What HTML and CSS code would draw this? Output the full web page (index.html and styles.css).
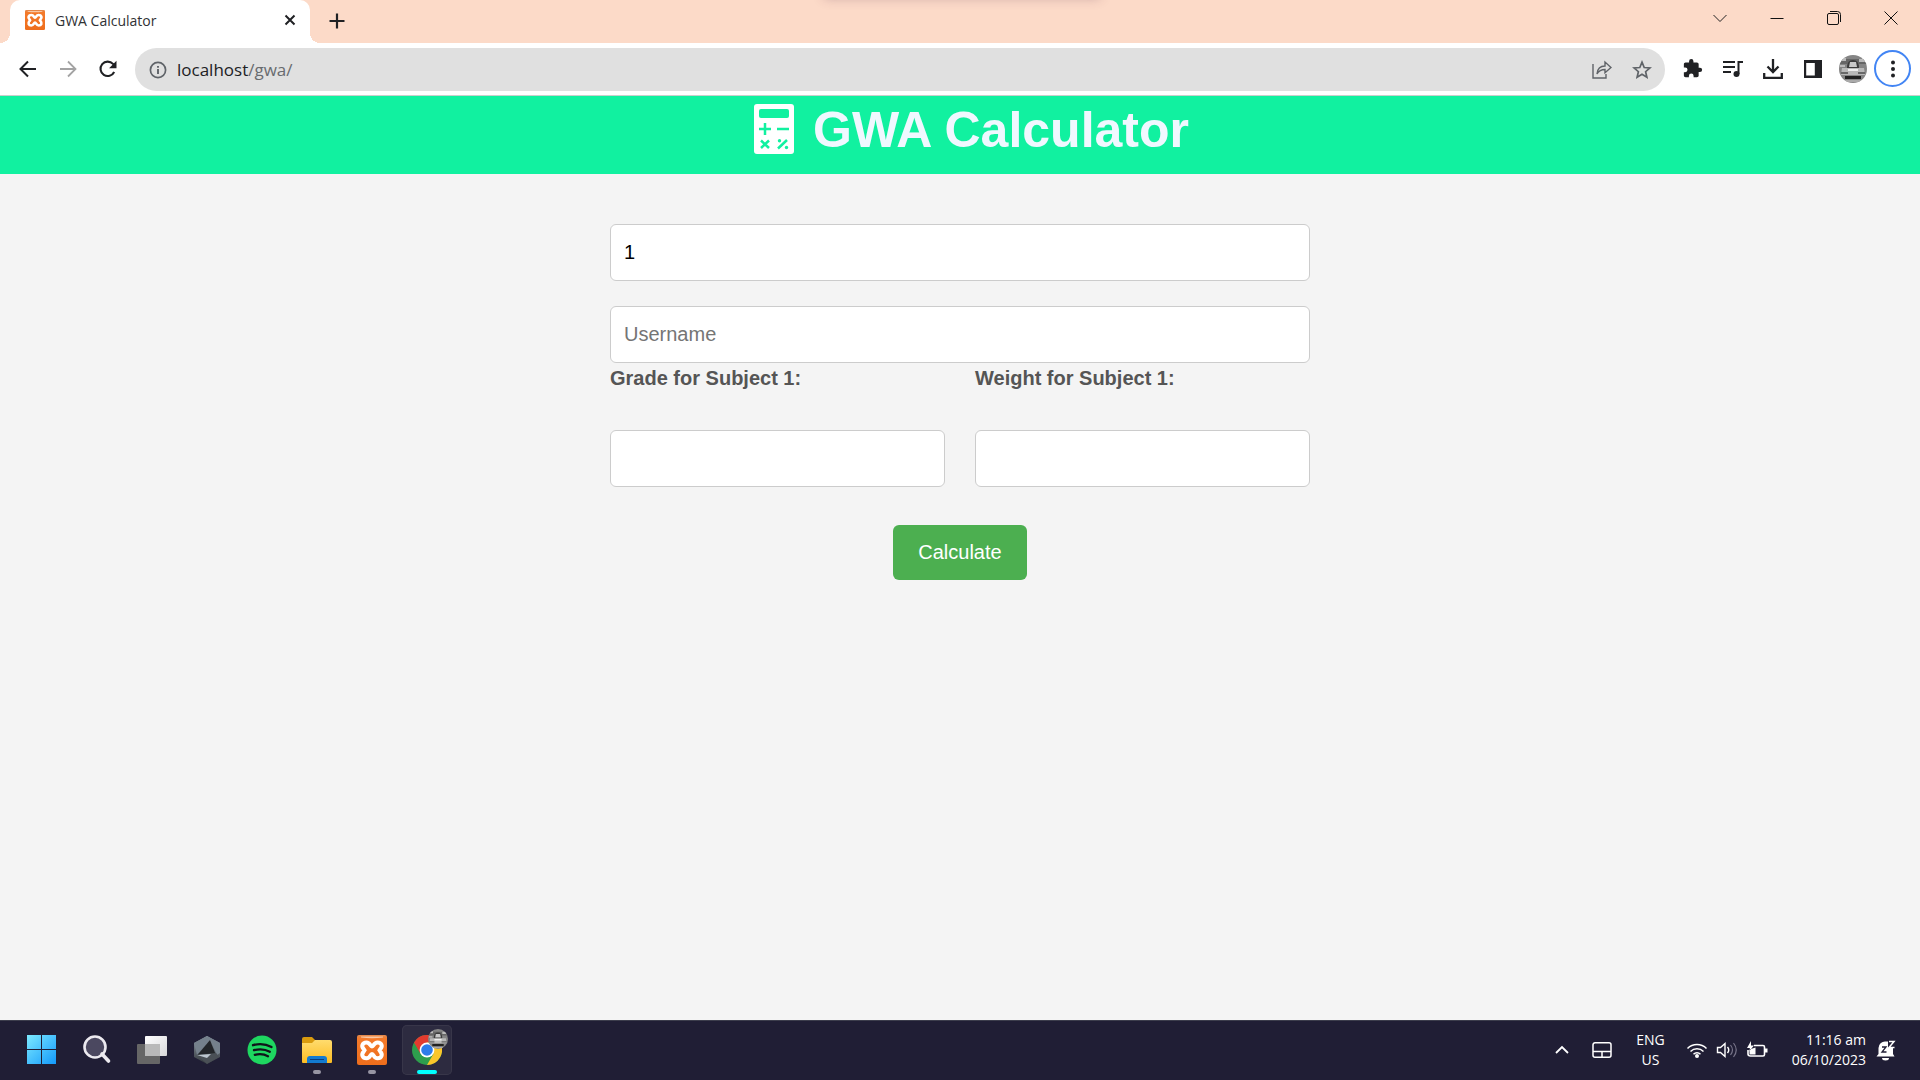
FILE: index.html
```html
<!DOCTYPE html>
<html lang="en">
<head>
<meta charset="utf-8">
<meta name="viewport" content="width=device-width, initial-scale=1">
<title>GWA Calculator</title>
<link rel="stylesheet" href="styles.css">
</head>
<body>
<svg class="defs" aria-hidden="true">
  <defs>
    <linearGradient id="orange" x1="0" y1="0" x2="0" y2="1"><stop offset="0" stop-color="#e08a50"/><stop offset=".12" stop-color="#f47a2a"/><stop offset="1" stop-color="#ee6d1c"/></linearGradient>
    <linearGradient id="win" x1="0" y1="0" x2="1" y2="1" ><stop offset="0" stop-color="#7deaff"/><stop offset="1" stop-color="#1399fb"/></linearGradient>
    <linearGradient id="folder" x1="0" y1="0" x2="0" y2="1"><stop offset="0" stop-color="#ffdc6e"/><stop offset="1" stop-color="#fcbc22"/></linearGradient>
    <linearGradient id="pane" x1="0" y1="0" x2="1" y2="1"><stop offset="0" stop-color="#fff"/><stop offset="1" stop-color="#d8d8da"/></linearGradient>
    <linearGradient id="steel" x1="0" y1="0" x2="0" y2="1"><stop offset="0" stop-color="#8f9aa5"/><stop offset="1" stop-color="#33383d"/></linearGradient>
    <clipPath id="round"><circle cx="14" cy="14" r="14"/></clipPath>
  </defs>
  <symbol id="xampp" viewBox="0 0 30 30">
    <rect width="30" height="30" rx="2" fill="url(#orange)"/>
    <path d="M4 1.500h22v1q-11 1.500-22 0z" fill="#f9c8a4"/>
    <path d="M15 11.500C17 11.500 16.500 7.500 20.500 7.500C24.700 7.500 26 11.500 23.300 14L22.500 15.300L23.300 16.600C26 19.500 24.700 23.300 20.500 23.300C16.500 23.300 17 19 15 19C13 19 13.500 23.300 9.500 23.300C5.300 23.300 4 19.500 6.700 16.600L7.500 15.300L6.700 14C4 11.500 5.300 7.500 9.500 7.500C13.500 7.500 13 11.500 15 11.500Z" fill="none" stroke="#fff" stroke-width="4"/>
  </symbol>
  <symbol id="avatar" viewBox="0 0 28 28">
    <g clip-path="url(#round)">
      <rect width="28" height="28" fill="#858585"/>
      <path d="M0 4h28v5H0z" fill="#666"/><path d="M2 3h5v3H2zM20 4h6v3h-6zM1 10h5v2H1z" fill="#bbb"/>
      <path d="M8 13q0-8 6-8t6 8z" fill="#3c3c3c"/><path d="M11 7h6l1 5h-8z" fill="#c8c8c8"/>
      <path d="M3 13h22l1 7H2z" fill="#b9b9b9"/><path d="M9 14h10v2H9z" fill="#eee"/>
      <path d="M2 17h7v2H2zM19 17h7v2h-7z" fill="#686868"/><path d="M6 21h16v3H6z" fill="#222"/><path d="M6 25h16v2H6z" fill="#aaa"/>
    </g>
  </symbol>
</svg>

<header class="browser">
  <div class="tabstrip">
    <div class="tab">
      <svg class="favicon" aria-hidden="true"><use href="#xampp"/></svg>
      <span class="tab-title">GWA Calculator</span>
      <button class="bare tab-close" aria-label="Close tab"><svg width="12" height="12" viewBox="0 0 12 12"><path d="M1.500 1.500l9 9m0-9l-9 9" stroke="#202124" stroke-width="2"/></svg></button>
    </div>
    <button class="bare new-tab" aria-label="New tab"><svg width="16" height="16" viewBox="0 0 16 16"><path d="M8 .5v15M.5 8h15" stroke="#202124" stroke-width="2.200"/></svg></button>
    <div class="window-controls">
      <button class="bare" aria-label="Search tabs"><svg width="14" height="14" viewBox="0 0 14 14"><path d="M.5 4L7 10.500L13.500 4" fill="none" stroke="#222"/></svg></button>
      <button class="bare" aria-label="Minimize"><svg width="14" height="14" viewBox="0 0 14 14"><path d="M.5 7.500h13" stroke="#111"/></svg></button>
      <button class="bare" aria-label="Restore"><svg width="14" height="14" viewBox="0 0 14 14"><rect x=".5" y="2.500" width="11" height="11" rx="1.500" fill="none" stroke="#111"/><path d="M3 .5h7.500a3 3 0 0 1 3 3V11" fill="none" stroke="#111"/></svg></button>
      <button class="bare" aria-label="Close"><svg width="14" height="14" viewBox="0 0 14 14"><path d="M.5 .5l13 13m0-13l-13 13" stroke="#111"/></svg></button>
    </div>
  </div>

  <div class="toolbar">
    <nav class="history">
      <button class="bare" aria-label="Back"><svg width="18" height="18" viewBox="0 0 18 18"><path d="M17 9H2M9 1.500L1.500 9L9 16.500" fill="none" stroke="#202124" stroke-width="2"/></svg></button>
      <button class="bare" aria-label="Forward"><svg width="18" height="18" viewBox="0 0 18 18"><path d="M1 9h15M9 1.500L16.500 9L9 16.500" fill="none" stroke="#a3a3a3" stroke-width="1.800"/></svg></button>
      <button class="bare" aria-label="Reload"><svg width="18" height="18" viewBox="0 0 18 18"><path d="M15.200 12A7.200 7.200 0 1 1 14 3.900L15.500 5.500" fill="none" stroke="#202124" stroke-width="2.100"/><path d="M17.500 .8v7.400h-7.400z" fill="#202124"/></svg></button>
    </nav>
    <div class="omnibox">
      <svg width="18" height="18" viewBox="0 0 18 18" aria-hidden="true"><circle cx="9" cy="9" r="7.600" fill="none" stroke="#5f6368" stroke-width="1.700"/><path d="M9 8v5M9 5v1.800" stroke="#5f6368" stroke-width="1.900"/></svg>
      <span class="url">localhost<span class="url-path">/gwa/</span></span>
      <button class="bare" aria-label="Share"><svg width="20" height="20" viewBox="0 0 20 20"><path d="M1 4v14h13v-4M5 14c.5-6 3.500-8 8-8V2l6 5.500l-6 5.300V9.500c-3.500 0-6 1-8 4.500z" fill="none" stroke="#5f6368" stroke-width="1.400"/></svg></button>
      <button class="bare" aria-label="Bookmark"><svg width="20" height="20" viewBox="0 0 20 20"><path d="M10 2.200l2.200 5.300 5.700.5-4.300 3.700 1.300 5.600-4.900-3-4.900 3 1.300-5.600L2.100 8l5.700-.5z" fill="none" stroke="#5f6368" stroke-width="1.700"/></svg></button>
    </div>
    <div class="actions">
      <button class="bare" aria-label="Extensions"><svg width="20" height="20" viewBox="1 1 23 23"><path d="M20.500 11H19V7c0-1.100-.9-2-2-2h-4V3.500a2.500 2.500 0 0 0-5 0V5H4c-1.100 0-2 .9-2 2v3.800h1.500a2.700 2.700 0 0 1 0 5.400H2V20c0 1.100.9 2 2 2h3.800v-1.500a2.700 2.700 0 0 1 5.400 0V22H17c1.100 0 2-.9 2-2v-4h1.500a2.500 2.500 0 0 0 0-5z" fill="#202124"/></svg></button>
      <button class="bare" aria-label="Media control"><svg width="20" height="20" viewBox="0 0 20 20"><path d="M0 3h12M0 8h12M0 13h8M15.500 15V3H20" fill="none" stroke="#202124" stroke-width="2"/><circle cx="13.500" cy="15" r="3" fill="#202124"/></svg></button>
      <button class="bare" aria-label="Downloads"><svg width="20" height="20" viewBox="0 0 20 20"><path d="M10 0v13M4.500 7.500L10 13l5.500-5.500M1.200 14v4.800h17.600V14" fill="none" stroke="#202124" stroke-width="2.300"/></svg></button>
      <button class="bare" aria-label="Side panel"><svg width="20" height="20" viewBox="0 0 20 20"><path d="M1 1h18v18H1zM3.200 4v12.500h8.600V4z" fill="#202124" fill-rule="evenodd"/></svg></button>
      <button class="bare" aria-label="Profile"><svg width="28" height="28"><use href="#avatar"/></svg></button>
      <button class="bare menu" aria-label="Menu"><svg width="6" height="18" viewBox="0 0 6 18"><g fill="#202124"><circle cx="3" cy="2.500" r="2"/><circle cx="3" cy="9" r="2"/><circle cx="3" cy="15.500" r="2"/></g></svg></button>
    </div>
  </div>
</header>

<main class="page">
  <h1 class="banner">
    <svg class="banner-icon" viewBox="0 0 50 50" aria-hidden="true">
      <rect x="5" width="40" height="50" rx="3" fill="#fff"/>
      <rect x="10" y="5" width="30" height="9" rx="2" fill="#11f1a0"/>
      <path d="M10 25h12M16 19v12M28 25h12M12 36.500l8 7.500m0-7.500l-8 7.500M29 44.500l9-8.500" stroke="#11f1a0" stroke-width="2.500"/>
      <circle cx="30.500" cy="36.700" r="1.700" fill="#11f1a0"/><circle cx="37.500" cy="43.500" r="1.700" fill="#11f1a0"/>
    </svg>
    <span>GWA Calculator</span>
  </h1>
  <form class="form">
    <input class="field" type="text" inputmode="numeric" value="1" aria-label="Number of subjects">
    <input class="field" type="text" placeholder="Username" aria-label="Username">
    <div class="pair">
      <div class="column">
        <label for="grade1">Grade for Subject 1:</label>
        <input class="field" id="grade1" type="text">
      </div>
      <div class="column">
        <label for="weight1">Weight for Subject 1:</label>
        <input class="field" id="weight1" type="text">
      </div>
    </div>
    <button class="submit" type="button">Calculate</button>
  </form>
</main>

<footer class="taskbar">
  <div class="apps">
    <button class="bare app" aria-label="Start"><svg width="30" height="30" viewBox="0 0 30 30"><path d="M0 0h14v14H0zM15 0h14v14H15zM0 15h14v14H0zM15 15h14v14H15z" fill="url(#win)"/></svg></button>
    <button class="bare app" aria-label="Search"><svg width="30" height="30" viewBox="0 0 30 30"><circle cx="13" cy="12" r="10.500" fill="#4b4860" stroke="#eceaf0" stroke-width="2.600"/><path d="M20 19l6.500 7" stroke="#eceaf0" stroke-width="3.600" stroke-linecap="round"/></svg></button>
    <button class="bare app" aria-label="Task view"><svg width="30" height="30" viewBox="0 0 30 30"><rect x="0" y="9" width="23" height="20" rx="1" fill="#666"/><rect x="8" y="1" width="22" height="20" rx="1" fill="url(#pane)"/><path d="M8 9h15v12H8z" fill="#b9b9b9"/></svg></button>
    <button class="bare app" aria-label="Armoury"><svg width="30" height="30" viewBox="0 0 30 30"><path d="M15 1l13 7v14l-13 7l-13-7V8z" fill="url(#steel)"/><path d="M15 1l13 7v10l-3 2l-7-15L5 20L2 8z" fill="#75818c"/><path d="M18 5L5.500 20l5 1l13-2z" fill="#23262a"/><path d="M5 20l19-2l3 4l-12 7z" fill="#4a5056"/><path d="M5 20l14-1l-4 4z" fill="#bcc6cf"/></svg></button>
    <button class="bare app" aria-label="Spotify"><svg width="30" height="30" viewBox="0 0 30 30"><circle cx="15" cy="15" r="14.500" fill="#1ed760"/><path d="M6 10.200q10-2.800 18.500 1.800M7 15.200q9-2.300 15.800 1.600M7.800 19.800q7.500-1.800 13.200 1.400" fill="none" stroke="#10151a" stroke-width="2.300" stroke-linecap="round"/></svg></button>
    <button class="bare app" aria-label="File Explorer"><svg width="30" height="30" viewBox="0 0 30 30"><path d="M0 4q0-2 2-2h8l3 3v6H0z" fill="#d99b0e"/><path d="M0 8h10l3-3h15q2 0 2 2v20q0 1-1 1H1q-1 0-1-1z" fill="url(#folder)"/><path d="M5 28v-4q0-3 3-3h14q3 0 3 3v4z" fill="#137bd0"/><path d="M8 24.500h14" stroke="#0a3e7d"/></svg><span class="dot"></span></button>
    <button class="bare app" aria-label="XAMPP"><svg width="30" height="30"><use href="#xampp"/></svg><span class="dot"></span></button>
    <button class="bare app active" aria-label="Chrome"><svg width="30" height="30" viewBox="0 0 30 30"><circle cx="15" cy="15" r="15" fill="#2e9e4d"/><path d="M2 7.500A15 15 0 0 1 28 7.500H15L8.500 18.800z" fill="#e33b2e"/><path d="M28 7.500A15 15 0 0 1 15 30L21.500 18.700L15 7.500z" fill="#fbc62a"/><circle cx="15" cy="15" r="7.400" fill="#fff"/><circle cx="15" cy="15" r="5.800" fill="#2d7cea"/></svg><svg class="badge" width="20" height="20"><use href="#avatar"/></svg><span class="dot"></span></button>
  </div>
  <div class="tray">
    <button class="bare" aria-label="Hidden icons"><svg width="16" height="16" viewBox="0 0 16 16"><path d="M2 11l6-6l6 6" fill="none" stroke="#fff" stroke-width="1.800"/></svg></button>
    <button class="bare touchpad" aria-label="Touchpad"><svg width="20" height="18" viewBox="0 0 20 18"><path d="M3 1.800h14a2 2 0 0 1 2 2v10.400a2 2 0 0 1-2 2H3a2 2 0 0 1-2-2V3.800a2 2 0 0 1 2-2zM1 10.500h18M10 10.500v5.500" fill="none" stroke="#fff" stroke-width="1.500"/></svg></button>
    <button class="bare lang">ENG<br>US</button>
    <button class="bare status" aria-label="Network, volume, battery">
      <svg width="22" height="18" viewBox="0 0 22 18"><g fill="none" stroke="#fff" stroke-width="1.500"><path d="M1.500 7.500a13.500 13.500 0 0 1 19 0M4.500 10.500a9.300 9.300 0 0 1 13 0M7.500 13.300a5 5 0 0 1 7 0"/></g><circle cx="11" cy="15" r="2" fill="#fff"/></svg>
      <svg width="22" height="18" viewBox="0 0 22 18"><path d="M1.500 6.500h3l4.500-4v13l-4.500-4h-3zM11.500 6q2.500 3 0 6" fill="none" stroke="#fff" stroke-width="1.400"/><path d="M14.500 4q4 5 0 10M17.500 2q5.500 7 0 14" fill="none" stroke="#777489" stroke-width="1.200"/></svg>
      <svg width="22" height="18" viewBox="0 0 22 18"><path d="M8 4.500h9q1.500 0 1.500 1.500v7.500q0 1.500-1.500 1.500H4.500Q2 15 2 13V9" fill="none" stroke="#fff" stroke-width="1.600"/><path d="M19 7.500h2.500v4H19zM3.500 8.500l6-2v7h-6zM5 0L1 7h3L2.500 11L8 4.500H5z" fill="#fff"/></svg>
    </button>
    <button class="bare clock">11:16 am<br>06/10/2023</button>
    <button class="bare" aria-label="Notifications"><svg width="20" height="22" viewBox="0 0 20 22"><path d="M2.500 15V9a6.500 6.500 0 0 1 7-6.500H12V9h5v6l1.500 2.500H.5z" fill="#fff"/><path d="M6 19a3.500 2.500 0 0 0 7 0z" fill="#fff"/><path d="M6 8h4l-4 5h4.500" fill="none" stroke="#201e35" stroke-width="1.300"/><path d="M13 2.500h5l-5 6h5.500" fill="none" stroke="#fff" stroke-width="1.500"/></svg></button>
  </div>
</footer>
</body>
</html>
```

FILE: styles.css
```css
* { box-sizing: border-box; }

body {
  margin: 0;
  min-height: 100vh;
  display: flex;
  flex-direction: column;
  background: #f4f4f4;
  font-family: "Liberation Sans", Arial, sans-serif;
  font-size: 20px;
}

svg { display: block; flex: none; }
.defs { position: absolute; width: 0; height: 0; }

.bare {
  display: flex;
  align-items: center;
  justify-content: center;
  padding: 0;
  border: 0;
  background: none;
  color: inherit;
  font: inherit;
}

/* Browser chrome */
.browser {
  font-family: "Open Sans", "Noto Sans", sans-serif;
  background: #fff;
  border-bottom: 1px solid #c9cfcc;
}

.tabstrip {
  position: relative;
  display: flex;
  align-items: center;
  height: 43px;
  padding: 0 1px 1px 10px;
  background: #fcdac8;
  overflow: hidden;
}

/* Shadow of a panel docked just above the window */
.tabstrip::before {
  content: "";
  position: absolute;
  left: 50%;
  top: -22px;
  width: 276px;
  height: 20px;
  margin-left: -136px;
  box-shadow: 0 0 12px rgba(90, 50, 80, .3);
}

.tab {
  position: relative;
  display: flex;
  align-items: center;
  height: 43px;
  width: 300px;
  padding: 0 14px 2px 15px;
  background: #fff;
  border-radius: 10px 10px 0 0;
}

.tab::before,
.tab::after {
  content: "";
  position: absolute;
  bottom: 0;
  width: 10px;
  height: 10px;
}
.tab::before { right: 100%; background: radial-gradient(circle at 0 0, transparent 10px, #fff 10px); }
.tab::after { left: 100%; background: radial-gradient(circle at 100% 0, transparent 10px, #fff 10px); }

.favicon { width: 20px; height: 20px; }
.tab-title { flex: 1; margin-left: 10px; font-size: 14px; font-weight: 400; color: #303134; }
.new-tab { margin-left: 19px; }

.window-controls {
  display: flex;
  align-self: flex-start;
  margin-left: auto;
}
.window-controls .bare { width: 57px; height: 36px; }

.toolbar {
  display: flex;
  align-items: center;
  padding: 5px 9px 4px 8px;
}

.history { display: flex; width: 127px; padding-bottom: 2px; }
.history .bare { width: 40px; }

.omnibox {
  flex: 1;
  display: flex;
  align-items: center;
  gap: 20px;
  height: 43px;
  padding: 0 13px 0 14px;
  border-radius: 22px;
  background: #e0e0e0;
}
.url { flex: 1; margin-left: -10px; font-size: 17px; color: #202124; }
.url-path { color: #686b6f; }

.actions { display: flex; align-items: center; margin-left: 8px; padding-bottom: 2px; }
.actions .bare { width: 40px; }
.actions .menu {
  width: 37px;
  height: 37px;
  margin-left: 1px;
  border: 2px solid #4285f4;
  border-radius: 50%;
}

/* Page */
.page { flex: 1; }

.banner {
  display: flex;
  justify-content: center;
  gap: 14px;
  margin: 0;
  padding: 8px 0 15px 18px;
  background: #11f1a0;
  color: aliceblue;
  font-size: 50px;
  line-height: 58px;
}
.banner span { margin-top: -3px; }
.banner-icon { width: 50px; height: 50px; }

.form {
  display: flex;
  flex-direction: column;
  width: 100%;
  max-width: 700px;
  margin: 50px auto;
}

.field {
  width: 100%;
  padding: 16px 13px;
  border: 1px solid #ccc;
  border-radius: 6px;
  background: #fff;
  font: 20px/23px "Liberation Sans", Arial, sans-serif;
  color: #000;
}
.field::placeholder { color: #757575; opacity: 1; }
.field + .field { margin-top: 25px; }

.pair { display: grid; grid-template-columns: 1fr 1fr; gap: 30px; }
.column { display: flex; flex-direction: column; gap: 37px; }
.column label { line-height: 30px; font-weight: 700; color: #555; }

.submit {
  align-self: center;
  margin-top: 38px;
  padding: 16px 25px;
  border: 0;
  border-radius: 6px;
  background: #4caf50;
  color: #fff;
  font: 20px/23px "Liberation Sans", Arial, sans-serif;
}

/* Taskbar */
.taskbar {
  display: flex;
  justify-content: space-between;
  align-items: center;
  height: 60px;
  padding: 0 24px 1px 17px;
  border-top: 1px solid #3c3d4c;
  background: #201e35;
  color: #fff;
  font: 14px/20px "Open Sans", "Noto Sans", sans-serif;
}

.apps { display: flex; gap: 5px; }
.app { position: relative; width: 50px; height: 50px; border-radius: 5px; }
.active { background: #2d2b40; box-shadow: inset 0 0 0 1px #383649; }

.dot {
  position: absolute;
  left: 21px;
  bottom: 1px;
  width: 8px;
  height: 4px;
  border-radius: 2px;
  background: #9795a3;
}
.active .dot { left: 15px; width: 20px; background: #0ff; }
.badge { position: absolute; right: 4px; top: 4px; }

.tray { display: flex; align-items: center; }
.touchpad { margin: 0 24px 0 22px; }
.lang { text-align: center; }
.status { gap: 8px; margin: 0 24px 0 21px; }
.clock { margin-right: 10px; text-align: right; }
```
